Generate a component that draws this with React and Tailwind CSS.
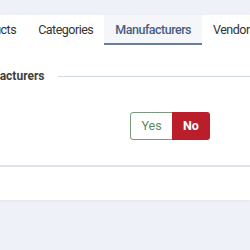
export default function App() {
  const font = { fontFamily: "Roboto, 'Noto Sans', sans-serif" };
  return (
    <div className="w-[250px] h-[250px] overflow-hidden bg-[#eef2f8] pt-[15px]" style={font}>
      <div className="bg-white shadow-[0_1px_3px_rgba(0,0,0,0.06)]">
        <div className="flex h-[30px] -ml-[41px] text-[12.5px] tracking-[-0.5px] text-[#333] whitespace-nowrap">
          <div className="px-[11px] flex items-center">Products</div>
          <div className="px-[11px] flex items-center">Categories</div>
          <div className="px-[11px] flex items-center bg-[#f4f6fa] border-b-2 border-[#6b7d9c] text-[#4a5d80] font-medium pt-[2px]">Manufacturers</div>
          <div className="px-[11px] flex items-center">Vendors</div>
        </div>
        <div className="pt-[23px]">
          <div className="flex items-center -ml-[35px]">
            <span className="text-[12px] leading-[16px] font-bold text-[#404040] whitespace-nowrap">Manufacturers</span>
            <div className="flex-1 ml-[14px] h-px bg-[#d6dce6]"></div>
          </div>
          <div className="flex justify-end pr-[40px] mt-[28px]">
            <div className="flex h-[28px] text-[12.5px] rounded-[3px] overflow-hidden">
              <div className="w-[42px] flex items-center justify-center border border-[#7a9a7e] border-r-0 rounded-l-[3px] text-[#5b8a60] bg-white">Yes</div>
              <div className="w-[38px] flex items-center justify-center bg-[#bb1e2b] text-white font-bold">No</div>
            </div>
          </div>
          <div className="mt-[25px] h-[2px] bg-[#dde1e8]"></div>
          <div className="h-[33px]"></div>
        </div>
      </div>
    </div>
  );
}
